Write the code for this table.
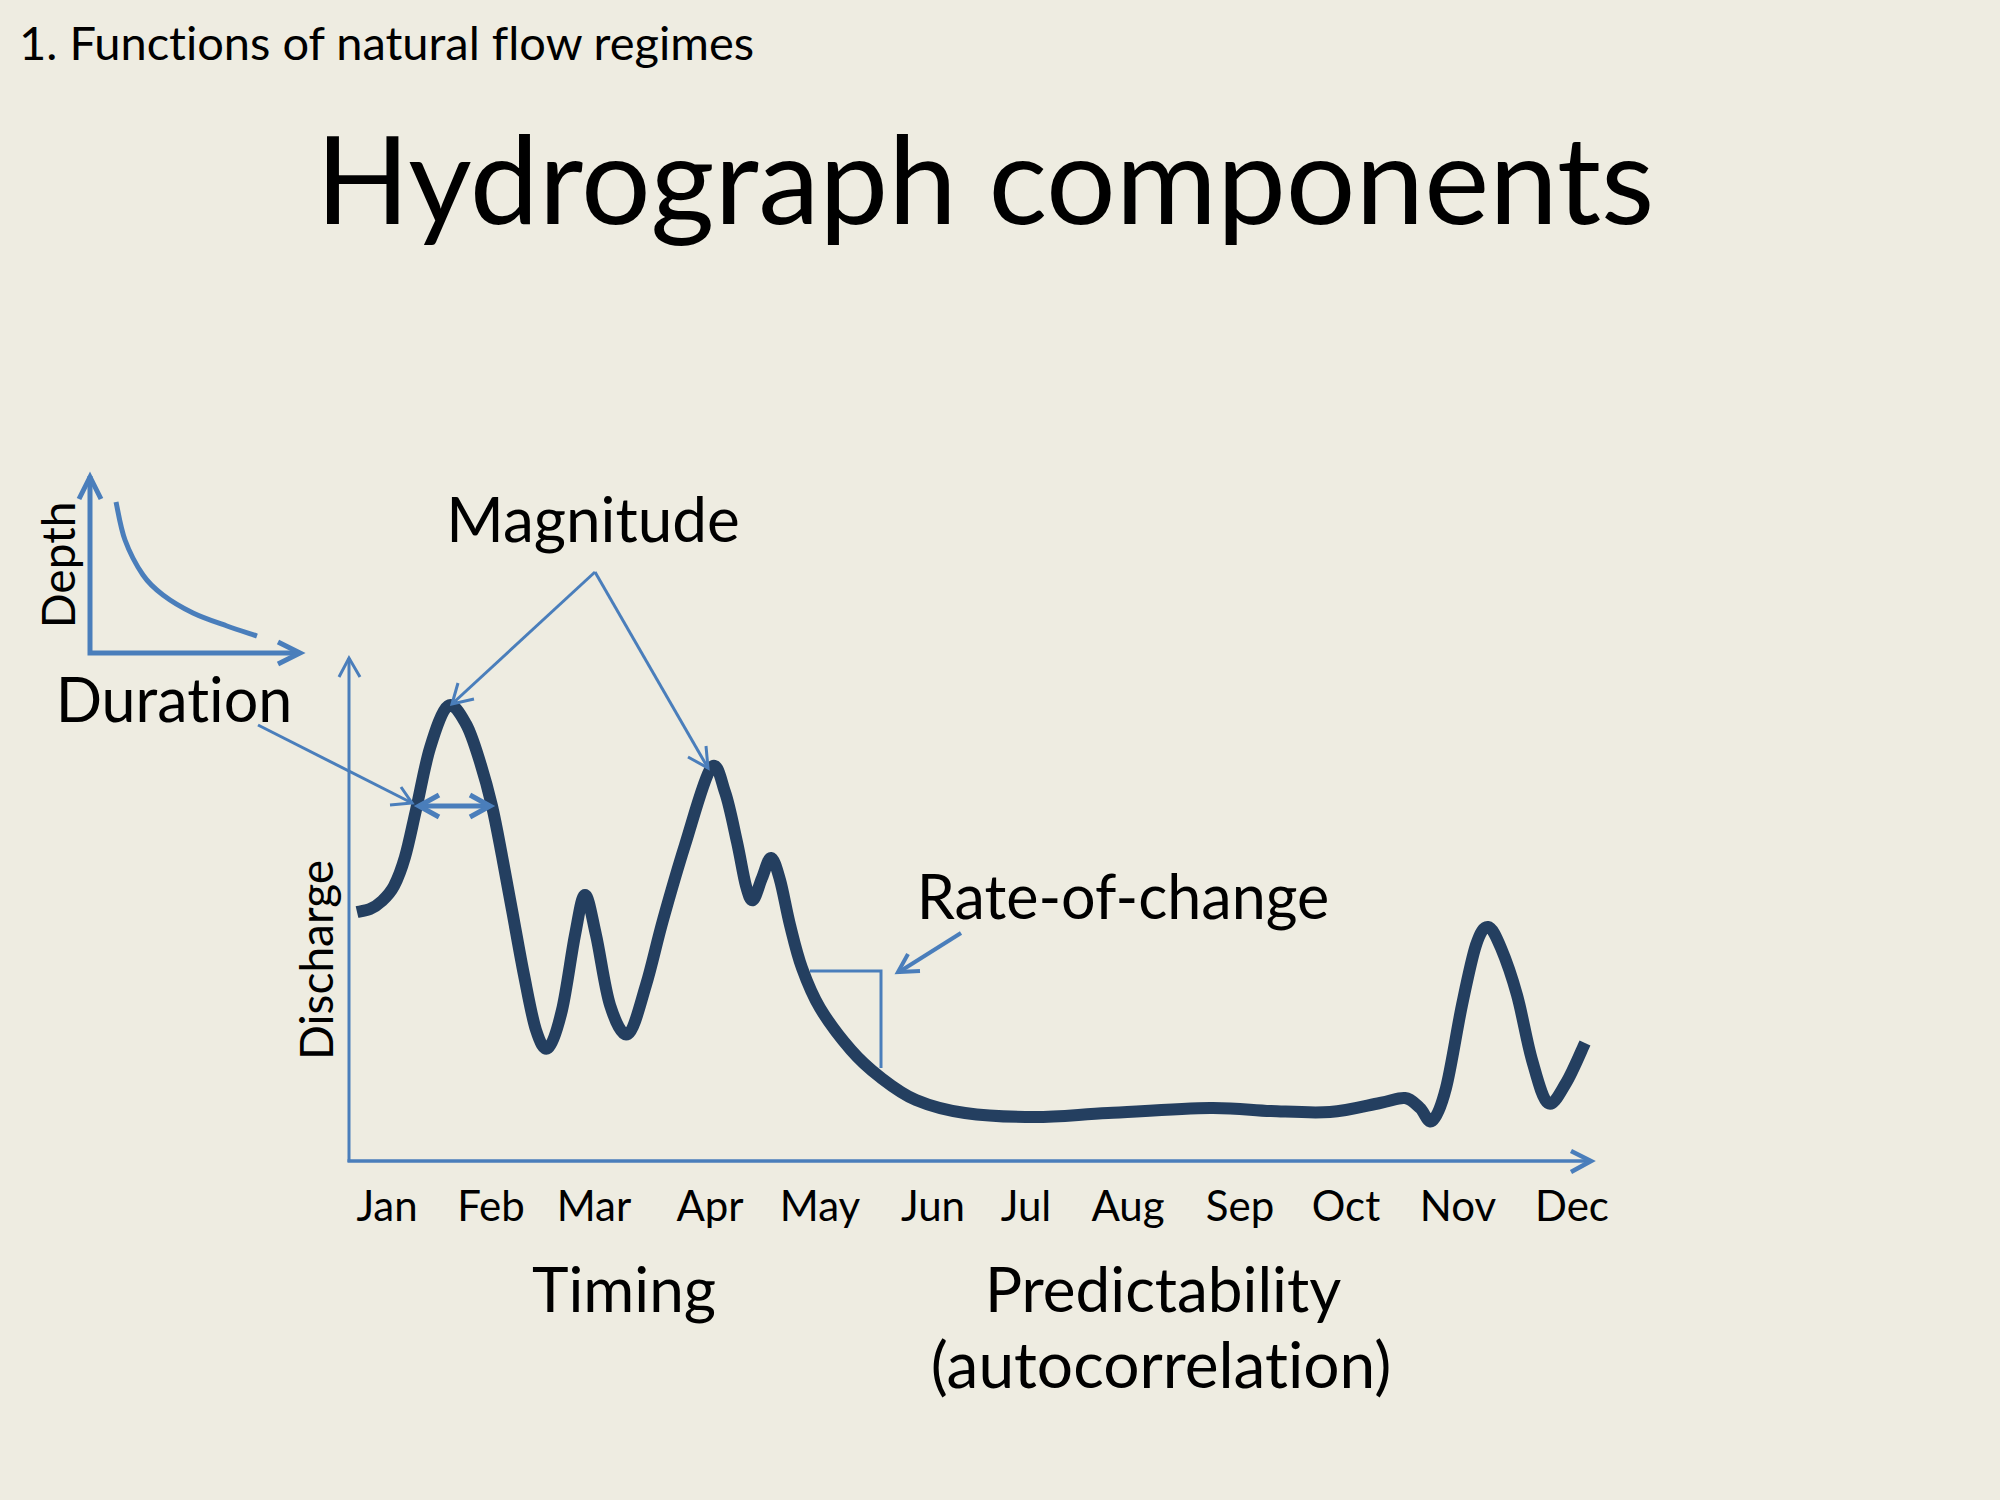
import React from "react"

type Pt = [number, number]

// catmull-rom -> cubic bezier, so the hand drawn curves stay smooth
const smooth = (p: Pt[]) => {
  let d = `M${p[0][0]} ${p[0][1]}`
  for (let i = 0; i < p.length - 1; i++) {
    const p0 = p[i - 1] || p[i]
    const p1 = p[i]
    const p2 = p[i + 1]
    const p3 = p[i + 2] || p2
    const c1x = p1[0] + (p2[0] - p0[0]) / 6
    const c1y = p1[1] + (p2[1] - p0[1]) / 6
    const c2x = p2[0] - (p3[0] - p1[0]) / 6
    const c2y = p2[1] - (p3[1] - p1[1]) / 6
    d += ` C${c1x.toFixed(1)} ${c1y.toFixed(1)} ${c2x.toFixed(1)} ${c2y.toFixed(1)} ${p2[0]} ${p2[1]}`
  }
  return d
}

const hydrograph: Pt[] = [
  [357, 912], [370, 909], [382, 901], [394, 886], [405, 857], [416, 810], [430, 748], [448, 706],
  [466, 724], [480, 762], [492, 806], [502, 856], [512, 910], [524, 975], [536, 1030], [548, 1048],
  [562, 1010], [575, 935], [585, 895], [596, 935], [610, 1005], [628, 1034],
  [646, 985], [663, 920], [685, 845], [711, 768],
  [725, 792], [737, 842], [746, 886], [753, 900], [762, 878], [771, 858],
  [780, 880], [790, 925], [802, 968], [820, 1008], [851, 1050], [880, 1077], [916, 1100],
  [965, 1113], [1035, 1117], [1108, 1113], [1210, 1108], [1271, 1111], [1330, 1112],
  [1380, 1103], [1405, 1098], [1420, 1108], [1432, 1121], [1446, 1088], [1462, 1005],
  [1476, 945], [1488, 927], [1501, 948], [1517, 995], [1532, 1060], [1548, 1103],
  [1566, 1083], [1585, 1043],
]

const depthCurve: Pt[] = [
  [116, 502], [125, 540], [143, 575], [163, 595], [193, 613], [227, 626], [257, 636],
]

const months: [string, number][] = [
  ["Jan", 387], ["Feb", 491], ["Mar", 594], ["Apr", 710], ["May", 820], ["Jun", 933],
  ["Jul", 1026], ["Aug", 1128], ["Sep", 1240], ["Oct", 1346], ["Nov", 1458], ["Dec", 1572],
]

const blue = "#4a7ebb"
const navy = "#243f60"

const App = () => {
  return (
    <div className="w-[2000px] h-[1500px] bg-[#eeece1] text-black font-['Lato',sans-serif] [font-variant-ligatures:none] overflow-hidden">
      <div className="pt-[19px] pl-[19px] text-[47px] leading-none">1. Functions of natural flow regimes</div>
      <h1 className="mt-[49px] pr-[30px] text-center text-[123px] leading-none font-normal">
        Hydrograph components
      </h1>

      {/* chart, drawn in page coordinates */}
      <svg className="block mt-[195px]" width="2000" height="1067" viewBox="0 433 2000 1067">
        {/* depth-duration inset */}
        <g stroke={blue} strokeWidth={5} fill="none" strokeLinecap="butt" strokeLinejoin="miter">
          <polyline points="90,476 90,653 300,653" />
          <polyline points="79,499 90,477 101,499" />
          <polyline points="278,642 300,653 278,664" />
          <path d={smooth(depthCurve)} />
        </g>
        <text transform="translate(75,565) rotate(-90)" textAnchor="middle" fontSize={46}>Depth</text>
        <text x={174} y={722} textAnchor="middle" fontSize={61}>Duration</text>

        {/* main axes */}
        <g stroke={blue} fill="none">
          <line x1={349} y1={1162} x2={349} y2={658} strokeWidth={3} />
          <polyline points="339,677 349,658 360,677" strokeWidth={3} />
          <line x1={347.5} y1={1161} x2={1590} y2={1161} strokeWidth={3.5} />
          <polyline points="1571,1151 1591,1161 1571,1172" strokeWidth={4.5} />
        </g>
        <text transform="translate(333,960) rotate(-90)" textAnchor="middle" fontSize={46}>Discharge</text>

        {/* hydrograph */}
        <path d={smooth(hydrograph)} stroke={navy} strokeWidth={12} fill="none" strokeLinejoin="round" />

        {/* annotations */}
        <g stroke={blue} fill="none" strokeLinejoin="miter">
          <line x1={595} y1={572} x2={452} y2={704} strokeWidth={3} />
          <polyline points="458,683 452,704 474,699" strokeWidth={3} />
          <line x1={595} y1={572} x2={708} y2={768} strokeWidth={3} />
          <polyline points="706,746 708,768 688,757" strokeWidth={3} />

          <line x1={258} y1={725} x2={412} y2={803} strokeWidth={3} />
          <polyline points="401,787 412,803 390,805" strokeWidth={3} />
          <line x1={419} y1={806} x2={490} y2={806} strokeWidth={5} />
          <polyline points="439,795 419,806 439,817" strokeWidth={5} />
          <polyline points="470,795 490,806 470,817" strokeWidth={5} />

          <polyline points="810,971 881,971 881,1068" strokeWidth={3} />
          <line x1={961} y1={933} x2={899} y2={972} strokeWidth={4} />
          <polyline points="908,954 898,972 920,971" strokeWidth={4} />
        </g>

        <text x={593} y={542} textAnchor="middle" fontSize={62}>Magnitude</text>
        <text x={1123} y={919} textAnchor="middle" fontSize={61}>Rate-of-change</text>

        {months.map(([m, x]) => (
          <text key={m} x={x} y={1221} textAnchor="middle" fontSize={42}>{m}</text>
        ))}

        <text x={624} y={1312} textAnchor="middle" fontSize={62}>Timing</text>
        <text x={1163} y={1312} textAnchor="middle" fontSize={62}>Predictability</text>
        <text x={1161} y={1388} textAnchor="middle" fontSize={64}>(autocorrelation)</text>
      </svg>
    </div>
  )
}

export default App
